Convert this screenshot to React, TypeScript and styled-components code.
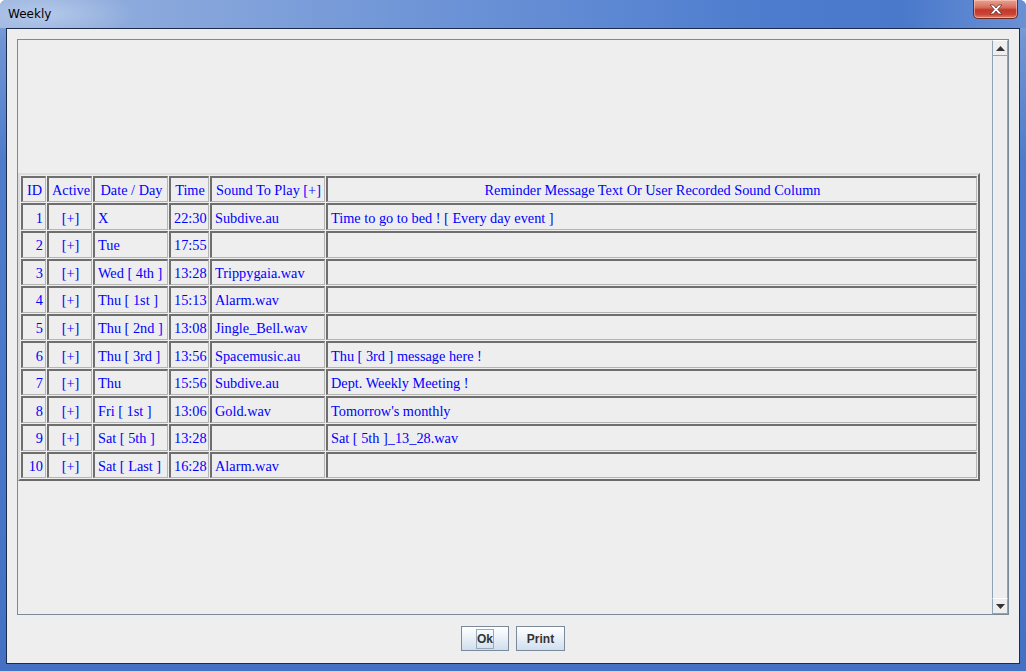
import React from 'react';
import styled, { createGlobalStyle } from 'styled-components';

const GlobalStyle = createGlobalStyle`
  html, body {
    margin: 0;
    padding: 0;
    background: #ffffff;
  }
`;

// Window frame (Windows 7 basic look)
const Window = styled.div`
  width: 1026px;
  height: 671px;
  box-sizing: border-box;
  display: flex;
  flex-direction: column;
  border-radius: 6px 6px 0 0;
  overflow: hidden;
  background: linear-gradient(180deg, #8aa7db 0px, #7095d4 40px, #4f7cca 160px, #4571c5 100%);
`;

const TitleBar = styled.div`
  position: relative;
  height: 28px;
  flex: none;
  display: flex;
  align-items: flex-start;
  justify-content: space-between;
  background:
    radial-gradient(ellipse 90px 26px at 45px 14px, rgba(205, 220, 243, 0.55), rgba(205, 220, 243, 0) 100%),
    linear-gradient(90deg, #9ab3de 0%, #8aa8dc 15%, #6b92d6 45%, #4d7cce 75%, #4a79cb 88%, #6a90d4 100%);
`;

const Title = styled.span`
  margin: 7px 0 0 8px;
  font-family: "DejaVu Sans", "Noto Sans", sans-serif;
  font-size: 12px;
  color: #000;
`;

const CloseButton = styled.div`
  width: 45px;
  height: 19px;
  margin-right: 8px;
  box-sizing: border-box;
  border: 1px solid #6b2a22;
  border-top: none;
  border-radius: 0 0 5px 5px;
  box-shadow: inset 0 0 0 1px rgba(255, 210, 200, 0.55);
  background: linear-gradient(180deg, #e9a392 0%, #d7715e 40%, #c3382a 55%, #c94535 80%, #e0826e 100%);
  display: flex;
  align-items: center;
  justify-content: center;
`;

const Client = styled.div`
  flex: 1;
  margin: 0 6px 7px 6px;
  border: 1px solid #1b2b4b;
  background: #eeeeee;
  display: flex;
  flex-direction: column;
  padding: 10px 10px 0 10px;
  min-height: 0;
`;

const ScrollPane = styled.div`
  flex: 1;
  display: flex;
  border: 1px solid #7a8a99;
  min-height: 0;
`;

const Viewport = styled.div`
  flex: 1;
  display: flex;
  align-items: center;
`;

const ScrollBar = styled.div`
  width: 16px;
  display: flex;
  flex-direction: column;
  background: #eeeeee;
`;

const ArrowButton = styled.div`
  width: 16px;
  height: 16px;
  box-sizing: border-box;
  border: 1px solid #ffffff;
  border-right-color: #8ea2b8;
  border-bottom-color: #8ea2b8;
  border-left-color: #8ea2b8;
  background: #eeeeee;
  display: flex;
  align-items: center;
  justify-content: center;
`;

const Track = styled.div`
  flex: 1;
  border-left: 1px solid #8ea2b8;
  border-right: 1px solid #8ea2b8;
  background: #eeeeee;
`;

const Table = styled.table`
  width: 962px;
  table-layout: fixed;
  border-collapse: separate;
  border-spacing: 1px;
  border-style: solid;
  border-width: 2px;
  border-color: #dcdcdc #6a6a6a #6a6a6a #dcdcdc;
  background: #eeeeee;
  font-family: "Liberation Serif", "Times New Roman", serif;
  font-size: 14.3px;
  color: #0000ff;
`;

const Cell = styled.td<{ $align?: string; $w?: number }>`
  box-sizing: border-box;
  height: 26.6px;
  ${p => (p.$w ? `width: ${p.$w}px;` : '')}
  padding: 1px 2px 0 3px;
  border-style: solid;
  border-width: 2px 1px 1px 2px;
  border-color: #6e6e6e #b4b4b4 #b4b4b4 #6e6e6e;
  text-align: ${p => p.$align || 'left'};
  vertical-align: middle;
  white-space: nowrap;
  overflow: hidden;
  line-height: 16px;
`;

const HeadCell = styled(Cell).attrs({ as: 'th' })`
  font-weight: normal;
  text-align: center;
`;

const ButtonRow = styled.div`
  height: 48px;
  flex: none;
  display: flex;
  align-items: center;
  justify-content: center;
  gap: 7px;
  padding-bottom: 1px;
  box-sizing: border-box;
`;

const Button = styled.div<{ $w: number }>`
  width: ${p => p.$w}px;
  height: 25px;
  box-sizing: border-box;
  border: 1px solid #7a8a99;
  background: linear-gradient(180deg, #ffffff 0%, #eef3f9 40%, #cfdeee 100%);
  display: flex;
  align-items: center;
  justify-content: center;
  font-family: "Liberation Sans", Arial, sans-serif;
  font-weight: bold;
  font-size: 12px;
  color: #333333;
`;

const Focus = styled.span`
  border: 1px solid #9aaabb;
  padding: 2px 0;
  line-height: 14px;
`;

const rows = [
  ['1', 'X', '22:30', 'Subdive.au', 'Time to go to bed ! [ Every day event ]'],
  ['2', 'Tue', '17:55', '', ''],
  ['3', 'Wed [ 4th ]', '13:28', 'Trippygaia.wav', ''],
  ['4', 'Thu [ 1st ]', '15:13', 'Alarm.wav', ''],
  ['5', 'Thu [ 2nd ]', '13:08', 'Jingle_Bell.wav', ''],
  ['6', 'Thu [ 3rd ]', '13:56', 'Spacemusic.au', 'Thu [ 3rd ] message here !'],
  ['7', 'Thu', '15:56', 'Subdive.au', 'Dept. Weekly Meeting !'],
  ['8', 'Fri [ 1st ]', '13:06', 'Gold.wav', "Tomorrow's monthly"],
  ['9', 'Sat [ 5th ]', '13:28', '', 'Sat [ 5th ]_13_28.wav'],
  ['10', 'Sat [ Last ]', '16:28', 'Alarm.wav', ''],
];

const Triangle = ({ down }: { down?: boolean }) => (
  <svg width="9" height="5" viewBox="0 0 9 5">
    <path d={down ? 'M0 0H9L4.5 5Z' : 'M0 5H9L4.5 0Z'} fill="#333" />
  </svg>
);

export default function App() {
  return (
    <>
      <GlobalStyle />
      <Window>
        <TitleBar>
          <Title>Weekly</Title>
          <CloseButton>
            <svg width="14" height="11" viewBox="0 0 14 11">
              <path
                d="M1 1H4.5L7 4L9.5 1H13L8.8 5.5L13 10H9.5L7 7L4.5 10H1L5.2 5.5Z"
                fill="#ffffff"
                stroke="#5a3a36"
                strokeWidth="0.8"
                strokeLinejoin="round"
              />
            </svg>
          </CloseButton>
        </TitleBar>
        <Client>
          <ScrollPane>
            <Viewport>
              <Table>
                <thead>
                  <tr>
                    <HeadCell $w={25}>ID</HeadCell>
                    <HeadCell $w={45}>Active</HeadCell>
                    <HeadCell $w={75}>Date / Day</HeadCell>
                    <HeadCell $w={40}>Time</HeadCell>
                    <HeadCell $w={115}>Sound To Play [+]</HeadCell>
                    <HeadCell>Reminder Message Text Or User Recorded Sound Column</HeadCell>
                  </tr>
                </thead>
                <tbody>
                  {rows.map(r => (
                    <tr key={r[0]}>
                      <Cell $align="right">{r[0]}</Cell>
                      <Cell $align="center">[+]</Cell>
                      <Cell>{r[1]}</Cell>
                      <Cell>{r[2]}</Cell>
                      <Cell>{r[3]}</Cell>
                      <Cell>{r[4]}</Cell>
                    </tr>
                  ))}
                </tbody>
              </Table>
            </Viewport>
            <ScrollBar>
              <ArrowButton>
                <Triangle />
              </ArrowButton>
              <Track />
              <ArrowButton>
                <Triangle down />
              </ArrowButton>
            </ScrollBar>
          </ScrollPane>
          <ButtonRow>
            <Button $w={48}>
              <Focus>Ok</Focus>
            </Button>
            <Button $w={49}>Print</Button>
          </ButtonRow>
        </Client>
      </Window>
    </>
  );
}
